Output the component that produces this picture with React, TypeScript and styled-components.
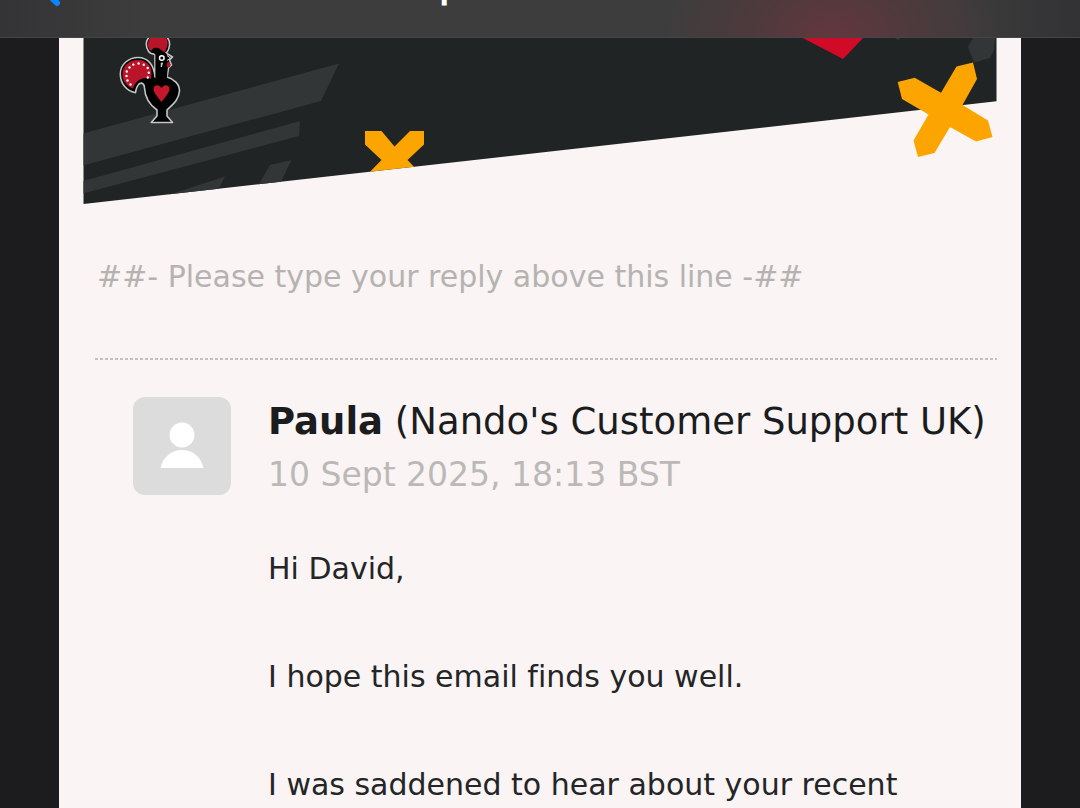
import React from "react";
import styled, { createGlobalStyle } from "styled-components";

const GlobalStyle = createGlobalStyle`
  * { box-sizing: border-box; }
  body {
    margin: 0;
    background: #1c1c1e;
    font-family: Verdana, "DejaVu Sans", sans-serif;
    font-variant-ligatures: none;
    color: #232526;
  }
`;

const Page = styled.div`
  height: 100vh;
  overflow: hidden;
  display: flex;
  flex-direction: column;
`;

const NavBar = styled.header`
  flex: none;
  height: 38px;
  display: flex;
  align-items: flex-end;
  overflow: hidden;
  border-bottom: 1px solid #444646;
  background:
    radial-gradient(ellipse 170px 130px at 77% 100%, rgba(125, 50, 62, 0.6), rgba(110, 52, 60, 0.35) 45%, transparent),
    linear-gradient(90deg, #343436, #3d3d3d 14%, #3d3d3d 88%, #323234);
`;

const BackButton = styled.button`
  flex: none;
  width: 80px;
  margin: 0 0 30px;
  padding: 0 0 0 34px;
  border: 0;
  background: none;
  display: flex;
`;

const NavTitle = styled.h1`
  flex: 1;
  margin: 0 98px 31px 0;
  text-align: center;
  font: 600 38px/44px Inter, "Liberation Sans", sans-serif;
  color: #fff;
  white-space: nowrap;
`;

const Sheet = styled.main`
  flex: 1;
  min-height: 0;
  overflow: hidden;
  margin: 0 59px;
  padding: 0 24px;
  background: #faf4f4;
`;

const Banner = styled.svg`
  display: block;
  width: 100%;
  height: auto;
`;

const ReplyHint = styled.p`
  margin: 46px 0 54px;
  padding-left: 14px;
  font-size: 30px;
  line-height: 54px;
  white-space: nowrap;
  color: #b5b3b2;
`;

const Divider = styled.hr`
  margin: 0 0 0 12px;
  border: 0;
  height: 2px;
  background: repeating-linear-gradient(90deg, #c4c0c0 0 3px, transparent 3px 5px);
`;

const Message = styled.article`
  display: grid;
  grid-template-columns: 98px 1fr;
  column-gap: 37px;
  padding: 37px 0 0 50px;
`;

const Avatar = styled.div`
  height: 98px;
  border-radius: 12px;
  background: #dcdcdc;
`;

const Author = styled.h2`
  margin: 0;
  font-size: 37px;
  line-height: 50px;
  font-weight: 400;
  white-space: nowrap;
  color: #1b1c1e;
`;

const Sent = styled.time`
  display: block;
  font-size: 33px;
  line-height: 56px;
  color: #bbb9b8;
`;

const Body = styled.div`
  display: grid;
  gap: 54px;
  margin-top: 39px;
`;

const Paragraph = styled.p`
  margin: 0;
  font-size: 30px;
  line-height: 54px;
  white-space: nowrap;
`;

const ROOSTER_DOTS = [
  [130.5, 84.5], [127.5, 80.5], [126.5, 76], [126.8, 71.5], [129.5, 67.5], [133.3, 64.6],
  [138.6, 63.5], [143.8, 64.7], [147.7, 68], [148.8, 72.8], [147.8, 77.5],
];

function Rooster() {
  return (
    <g>
      <path
        fill="#000"
        stroke="#c3c6c5"
        strokeWidth="1.6"
        strokeLinejoin="round"
        d="M155 54 C150 55 146.300 50 146.300 44 C146.500 38 151 34 158 34 C166 34 170 39 169.500 45 C169 49 167.500 52 166 53 L172.500 57 L169.500 60 L171.500 65 L168.500 68 L167 77 C174 79 179.500 84 179.500 91 C178.500 101 172 105 167 110 L167 116 L172.500 122.500 L151.200 122.500 L157 116 L157 110 C150 105 145 98 144.500 88 C144.500 84 142 82 139 84 C137 86 136 89 135.500 92.700 C126 91 120.300 83 120.300 74 C120.300 64 129 57.500 138 57.500 C148 57.500 154 65 155 77 Z"
      />
      <path fill="#000" d="M155.500 77 L155.500 53 L166 53 L168 58 L167 78 Z" />
      <path fill="#b9142a" d="M154 51 C150 51.500 148 48.500 148 45 C148 38 152 35 158 35 C165 35 168.500 39 167.500 45 L165 52 C161 52 160 47 156 48 Z" />
      <path fill="#b9142a" d="M133 88.500 C126 86 122 80 122.500 74 C122.500 66 129 60 138 60 C147 60 152 67 151.500 73 L151 79 C146 76.500 136 78 133 88.500 Z" />
      <path fill="#000" d="M151.500 51 C153 46.500 158 46.500 160.500 52 L156 55 Z" />
      <g fill="#fff">
        {ROOSTER_DOTS.map(([x, y]) => (
          <circle key={`${x}-${y}`} cx={x} cy={y} r="1.2" />
        ))}
      </g>
      <circle cx="161.800" cy="58" r="2.300" fill="#000" stroke="#fff" strokeWidth="1.500" />
      <path d="M167 55.500 L170.500 58 L167 60.500 M161.300 63 L162.500 63 L161.300 67 Z" fill="none" stroke="#ddd" strokeWidth="1" />
      <path d="M168 61.500 C171 63 171 67.500 168.500 67.500 C166 67 166.500 64 168 61.500 Z" fill="#b9142a" />
      <path fill="#c4172c" d="M161.500 102 C158 97 153.500 93 153.500 88.500 C153.500 85 159 83.500 161.500 88 C164 83.500 169.500 85 169.500 88.500 C169.500 93 165 97 161.500 102 Z" />
    </g>
  );
}

function BannerArt() {
  return (
    <Banner viewBox="83 38 914 166" role="img" aria-label="Nando's">
      <defs>
        <clipPath id="slope">
          <path d="M83.500 38 H996.500 V101.300 L83.500 204 Z" />
        </clipPath>
      </defs>
      <g clipPath="url(#slope)">
        <path fill="#202424" d="M83 38 H997 V204 H83 Z" />
        <g fill="#323637">
          <path d="M83 133.500 L339 63.500 L321 101 L83 165.500 Z" />
          <path d="M83 181 L300 121 L299 136 L83 193.500 Z" />
          <path d="M255 191 L270 165 L291.500 160 L277 190 Z" />
          <path d="M165 196 L225 176.500 L215 196 Z" />
          <path d="M973 38 H995 L994 50 L990 58 L974 62.500 L968 47 Z" />
          <path d="M895 38 H901 L898 40 Z" />
        </g>
        <path fill="#d10a28" d="M801 37 H864 L843 59 Z" />
        <path fill="#fca500" d="M365 131 H381.500 L394.500 146.500 L410 131 H424 V144.500 L407.500 160 L419 172 L419 180 L362 180 L381.500 160 L365 144.500 Z" />
      </g>
      <path fill="#fca500" d="M897.700 82 L914.700 77.800 L941 92.700 L956.500 66.500 L973 62.500 L977 79 L962.500 105 L988 120.500 L992.500 137 L976 141.500 L950 127 L934.500 153 L918 157 L913.500 140.500 L928.500 114.500 L902 99 Z" />
      <Rooster />
    </Banner>
  );
}

export default function App() {
  return (
    <Page>
      <GlobalStyle />
      <NavBar>
        <BackButton aria-label="Back">
          <svg width="28" height="44" viewBox="0 0 28 44" fill="none" stroke="#0a84ff" strokeWidth="6" strokeLinecap="round" strokeLinejoin="round">
            <path d="M23 4 L5 22 L23 40" />
          </svg>
        </BackButton>
        <NavTitle>Caterpillar in Nandos</NavTitle>
      </NavBar>
      <Sheet>
        <BannerArt />
        <ReplyHint>##- Please type your reply above this line -##</ReplyHint>
        <Divider />
        <Message>
          <Avatar>
            <svg width="98" height="98" viewBox="0 0 98 98" fill="#fff" aria-hidden="true">
              <circle cx="49" cy="38" r="12.500" />
              <path d="M27.500 71 C30 60 38 53 49 53 C60 53 68 60 70.500 71 Z" />
            </svg>
          </Avatar>
          <div>
            <Author>
              <b>Paula</b> (Nando's Customer Support UK)
            </Author>
            <Sent dateTime="2025-09-10T18:13+01:00">10 Sept 2025, 18:13 BST</Sent>
            <Body>
              <Paragraph>Hi David,</Paragraph>
              <Paragraph>I hope this email finds you well.</Paragraph>
              <Paragraph>I was saddened to hear about your recent</Paragraph>
            </Body>
          </div>
        </Message>
      </Sheet>
    </Page>
  );
}
